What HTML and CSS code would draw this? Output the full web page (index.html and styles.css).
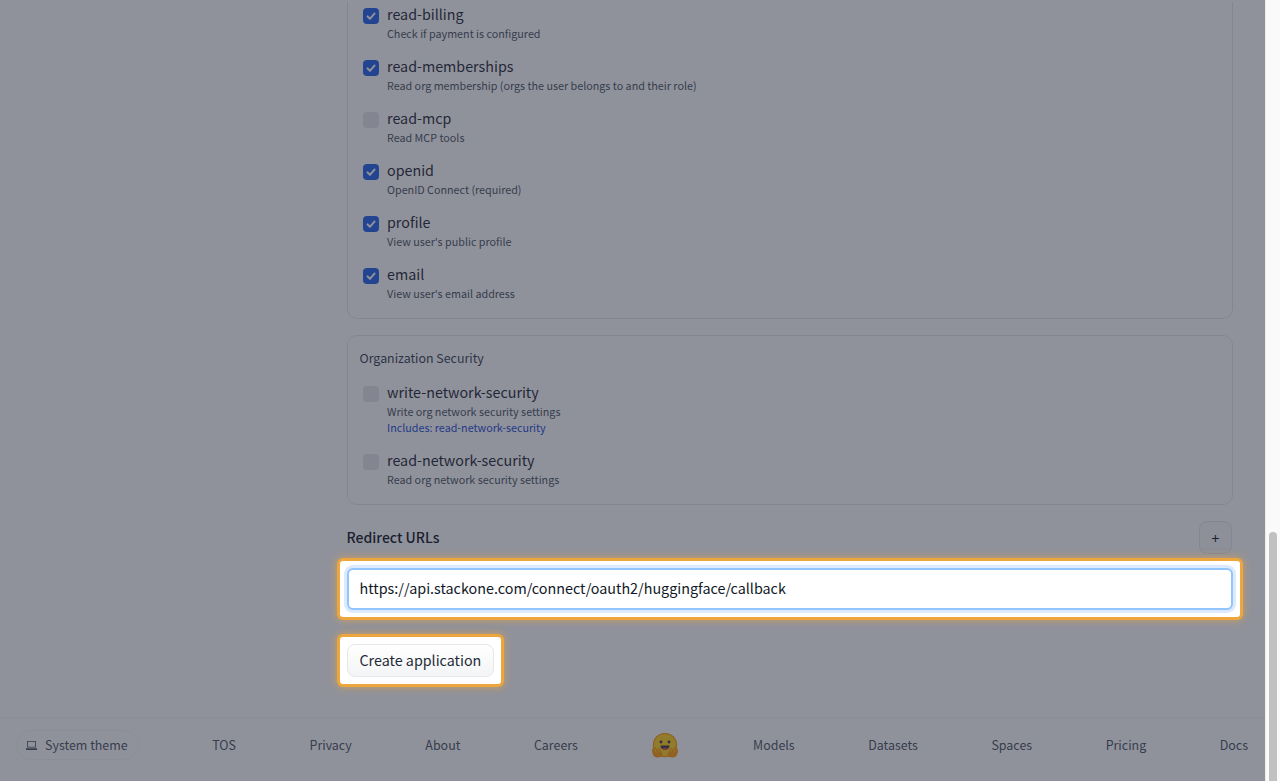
FILE: index.html
```html
<!DOCTYPE html>
<html lang="en">
<head>
<meta charset="utf-8">
<title>Create application</title>
<link rel="stylesheet" href="styles.css">
</head>
<body>
<div class="page">
  <div class="overlay"></div>
  <main class="main">
    <section class="card card-cut">
      <label class="item"><span class="box on"><svg viewBox="0 0 16 16"><path d="M4.500 8.400l2.400 2.400L11.500 5.600"/></svg></span><span class="txt"><span class="name">read-billing</span><span class="desc">Check if payment is configured</span></span></label>
      <label class="item"><span class="box on"><svg viewBox="0 0 16 16"><path d="M4.500 8.400l2.400 2.400L11.500 5.600"/></svg></span><span class="txt"><span class="name">read-memberships</span><span class="desc">Read org membership (orgs the user belongs to and their role)</span></span></label>
      <label class="item"><span class="box"></span><span class="txt"><span class="name">read-mcp</span><span class="desc">Read MCP tools</span></span></label>
      <label class="item"><span class="box on"><svg viewBox="0 0 16 16"><path d="M4.500 8.400l2.400 2.400L11.500 5.600"/></svg></span><span class="txt"><span class="name">openid</span><span class="desc">OpenID Connect (required)</span></span></label>
      <label class="item"><span class="box on"><svg viewBox="0 0 16 16"><path d="M4.500 8.400l2.400 2.400L11.500 5.600"/></svg></span><span class="txt"><span class="name">profile</span><span class="desc">View user's public profile</span></span></label>
      <label class="item"><span class="box on"><svg viewBox="0 0 16 16"><path d="M4.500 8.400l2.400 2.400L11.500 5.600"/></svg></span><span class="txt"><span class="name">email</span><span class="desc">View user's email address</span></span></label>
    </section>
    <section class="card">
      <h3 class="card-title">Organization Security</h3>
      <label class="item"><span class="box"></span><span class="txt"><span class="name">write-network-security</span><span class="desc">Write org network security settings</span><span class="desc incl">Includes: read-network-security</span></span></label>
      <label class="item"><span class="box"></span><span class="txt"><span class="name">read-network-security</span><span class="desc">Read org network security settings</span></span></label>
    </section>
    <div class="urls-head">
      <h2 class="urls-title">Redirect URLs</h2>
      <button class="plus" type="button">+</button>
    </div>
    <div class="spot spot-input">
      <input class="url-input" type="text" value="https://api.stackone.com/connect/oauth2/huggingface/callback">
    </div>
    <div class="spot spot-create">
      <button class="create" type="button">Create application</button>
    </div>
  </main>
  <footer class="footer">
    <span class="theme"><svg viewBox="0 0 32 32"><path class="fillicon" d="M5 5h22v16H5z M7 7v12h18V7z M2 23h28v1.600a2.400 2.400 0 0 1-2.400 2.400H4.400a2.400 2.400 0 0 1-2.400-2.400z" fill-rule="evenodd"/></svg>System theme</span>
    <a class="flink">TOS</a>
    <a class="flink">Privacy</a>
    <a class="flink">About</a>
    <a class="flink">Careers</a>
    <svg class="logo" viewBox="0 0 28 25">
      <circle cx="14" cy="12" r="11.600" fill="#ffd21e" stroke="#ff9d0b" stroke-width="1.200"/>
      <circle cx="10" cy="9" r="1.400" fill="#3a3b45"/>
      <circle cx="18" cy="9" r="1.400" fill="#3a3b45"/>
      <path d="M9.500 12.500h9c0 2.800-2 4.300-4.500 4.300s-4.500-1.500-4.500-4.300z" fill="#3a3b45"/>
      <path d="M11.300 15.300c1.600-.7 3.800-.7 5.400 0-.7 1-1.600 1.500-2.700 1.500s-2-.5-2.700-1.500z" fill="#ef4e4e"/>
      <path d="M1.200 19c-.6-2.500.6-4.700 2-5 1-.2 1.500.5 2 1.300l.8 1.100 1.200-1.300c.7-.6 1.500-.2 1.700.6l2.200 4.300c.8 2 .2 3.500-1.600 4.100-1.900.6-5 .6-6.600-.9-.9-.8-1.400-2.300-1.700-4.200z" fill="#ff9d0b"/>
      <path d="M26.800 19c.6-2.500-.6-4.700-2-5-1-.2-1.500.5-2 1.300l-.8 1.100-1.200-1.300c-.7-.6-1.500-.2-1.700.6l-2.200 4.300c-.8 2-.2 3.500 1.600 4.100 1.900.6 5 .6 6.600-.9.900-.8 1.400-2.300 1.700-4.200z" fill="#ff9d0b"/>
      <path d="M3.500 15.500l1.800 4M7 16l1.500 3.500M24.500 15.500l-1.800 4M21 16l-1.500 3.500" stroke="#ffd21e" stroke-width=".9" fill="none"/>
    </svg>
    <a class="flink">Models</a>
    <a class="flink">Datasets</a>
    <a class="flink">Spaces</a>
    <a class="flink">Pricing</a>
    <a class="flink">Docs</a>
  </footer>
</div>
<div class="scrollbar"><div class="thumb"></div></div>
</body>
</html>
```
FILE: styles.css
```css
* { box-sizing: border-box; }
html, body { height: 100%; margin: 0; }
body {
  display: flex;
  overflow: hidden;
  background: #fff;
  color: #1f2937;
  font-family: "Noto Sans CJK SC", "Noto Sans", sans-serif;
}
.page {
  position: relative;
  flex: 1;
  min-width: 0;
  height: 781px;
  display: flex;
  flex-direction: column;
}
.overlay {
  position: absolute;
  inset: 0;
  z-index: 10;
  background: rgba(33, 37, 56, 0.5);
}
.main {
  flex: 1;
  display: flex;
  flex-direction: column;
  padding: 2px 32.500px 0 346.500px;
}
.card {
  display: flex;
  flex-direction: column;
  gap: 12px;
  border: 1px solid #e5e7eb;
  border-radius: 10px;
  padding: 12px 12px 16px 12px;
  margin-bottom: 16px;
}
.card-cut {
  border-top: none;
  border-top-left-radius: 0;
  border-top-right-radius: 0;
  padding-top: 0;
}
.card-title {
  margin: 0;
  font-size: 12.400px;
  font-weight: 400;
  line-height: 20px;
  color: #374151;
}
.item { display: flex; gap: 8px; padding-left: 3.500px; }
.box {
  flex: none;
  width: 16px;
  height: 16px;
  margin-top: 6px;
  border-radius: 4px;
  background: #e5e7eb;
}
.box.on { background: #2563eb; }
.box svg { display: block; width: 16px; height: 16px; }
.box path { fill: none; stroke: #fff; stroke-width: 2; stroke-linecap: round; stroke-linejoin: round; }
.txt { display: flex; flex-direction: column; }
.name { font-size: 14.300px; line-height: 23px; margin-bottom: 1px; color: #1f2937; }
.desc { font-size: 10.750px; line-height: 16px; color: #4b5563; }
.incl { color: #1d4ed8; }
.urls-head {
  display: flex;
  align-items: center;
  justify-content: space-between;
  margin-bottom: 14px;
}
.urls-title { margin: 0 0 2px; font-size: 14px; font-weight: 500; line-height: 24px; color: #111827; }
.plus {
  width: 33px;
  height: 33px;
  margin-right: 0.500px;
  padding: 0;
  border: 1px solid #e5e7eb;
  border-radius: 8px;
  background: #f9fafb;
  font: 14px "Noto Sans CJK SC", sans-serif;
  color: #111827;
}
.spot {
  position: relative;
  z-index: 20;
  padding: 7px;
  border-radius: 3px;
  background: #fff;
  box-shadow: 0 0 0 3px #eda63e, 0 0 7px 4px rgba(237, 166, 62, 0.55);
}
.spot-input { margin: -7px -7px 20px; }
.spot-create { margin: 0 -7px; align-self: flex-start; }
.url-input {
  display: block;
  height: 42px;
  width: 100%;
  padding: 0 11px 4px;
  border: 2px solid #93c5fd;
  border-radius: 6px;
  background: #fff;
  font: 14.350px "Noto Sans CJK SC", sans-serif;
  color: #111827;
  outline: none;
  box-shadow: 0 0 0 3px #dbeafe;
}
.create {
  display: block;
  height: 33px;
  padding: 0 12px 3px;
  border: 1px solid #e5e7eb;
  border-radius: 8px;
  background: linear-gradient(#fff, #f3f4f6);
  font: 14.300px "Noto Sans CJK SC", sans-serif;
  color: #1f2937;
}
.footer {
  flex: none;
  height: 64px;
  display: flex;
  align-items: center;
  justify-content: space-between;
  padding: 0 17px 9px 16px;
  border-top: 1px solid #f3f4f6;
  font-size: 12.450px;
  color: #4b5563;
}
.theme {
  display: flex;
  align-items: center;
  gap: 7px;
  height: 30px;
  padding: 0 10px 0 8px;
  border: 1px solid #f3f4f6;
  border-radius: 999px;
}
.theme svg { width: 13px; height: 13px; }
.fillicon { fill: #4b5563; }
.logo { width: 28px; height: 25px; }
.scrollbar {
  flex: none;
  width: 15px;
  height: 781px;
  display: flex;
  justify-content: center;
  padding-top: 532px;
  background: #fafafa;
  border-left: 1px solid #ededed;
}
.thumb { width: 8px; height: 249px; border-radius: 4px 4px 0 0; background: #c1c1c1; }
```
